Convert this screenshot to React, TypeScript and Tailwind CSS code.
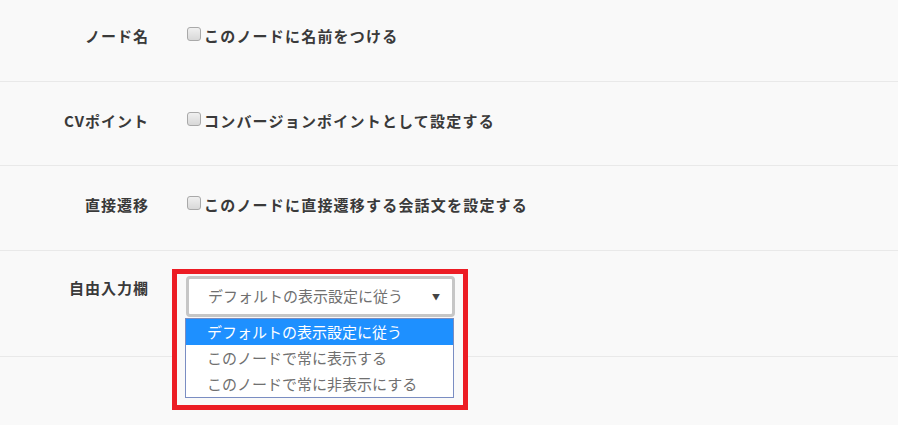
import React from "react";

const font = { fontFamily: '"Noto Sans CJK JP", "Noto Sans", sans-serif' };

function Checkbox() {
  return (
    <span className="relative -top-[2px] ml-px mr-[3px] inline-block h-[14px] w-[14px] shrink-0 rounded-[3px] border border-[#a9a9a9] bg-gradient-to-b from-[#f0f0f0] to-[#d8d8d8]" />
  );
}

function Row({
  label,
  h,
  children,
}: {
  label: string;
  h: string;
  children: React.ReactNode;
}) {
  return (
    <div className={`flex border-b border-[#e9e9e9] pt-[27px] ${h}`}>
      <div className="w-[149px] shrink-0 text-right text-[15px] font-bold leading-6 tracking-[1px] text-[#3a3a3a]">
        {label}
      </div>
      <div className="ml-[37px] flex-1">{children}</div>
    </div>
  );
}

function CheckOption({ text }: { text: string }) {
  return (
    <label className="flex items-center text-[15px] font-bold leading-6 tracking-[1.2px] text-[#3a3a3a]">
      <Checkbox />
      {text}
    </label>
  );
}

const options = [
  "デフォルトの表示設定に従う",
  "このノードで常に表示する",
  "このノードで常に非表示にする",
];

export default function App() {
  return (
    <div className="h-[425px] w-[898px] overflow-hidden bg-[#f9f9f9]" style={font}>
      <div className="-mt-[3px]">
        <Row label="ノード名" h="h-[85px]">
          <CheckOption text="このノードに名前をつける" />
        </Row>
        <Row label="CVポイント" h="h-[84px]">
          <CheckOption text="コンバージョンポイントとして設定する" />
        </Row>
        <Row label="直接遷移" h="h-[85px]">
          <CheckOption text="このノードに直接遷移する会話文を設定する" />
        </Row>
        <div className="flex h-[106px] border-b border-[#e9e9e9] pt-[25px]">
          <div className="w-[149px] shrink-0 text-right text-[15px] font-bold leading-6 tracking-[1px] text-[#3a3a3a]">
            自由入力欄
          </div>
          <div className="ml-[37px] flex-1">
            <div className="relative w-[269px]">
              <div className="absolute -left-[14px] -top-[7px] z-0 h-[141px] w-[296px] border-[5px] border-[#ec1c24] bg-[#f9f9f9]" />
              <div className="relative z-10 flex h-[41px] items-center justify-between rounded-[4px] border-[3px] border-[#c6c6c6] bg-white pl-[19px] pr-[12px] text-[15px] text-[#707070]">
                <span>デフォルトの表示設定に従う</span>
                <span className="text-[8px] text-[#444]">▼</span>
              </div>
              <div className="absolute -left-px top-[42px] z-20 w-[269px] border border-[#7a8dc2] bg-white text-[15px]">
                {options.map((o, i) => (
                  <div
                    key={o}
                    className={`flex h-[26px] items-center pl-[21px] ${
                      i === 0 ? "bg-[#1e90ff] text-white" : "text-[#707070]"
                    }`}
                  >
                    {o}
                  </div>
                ))}
              </div>
            </div>
          </div>
        </div>
      </div>
    </div>
  );
}
